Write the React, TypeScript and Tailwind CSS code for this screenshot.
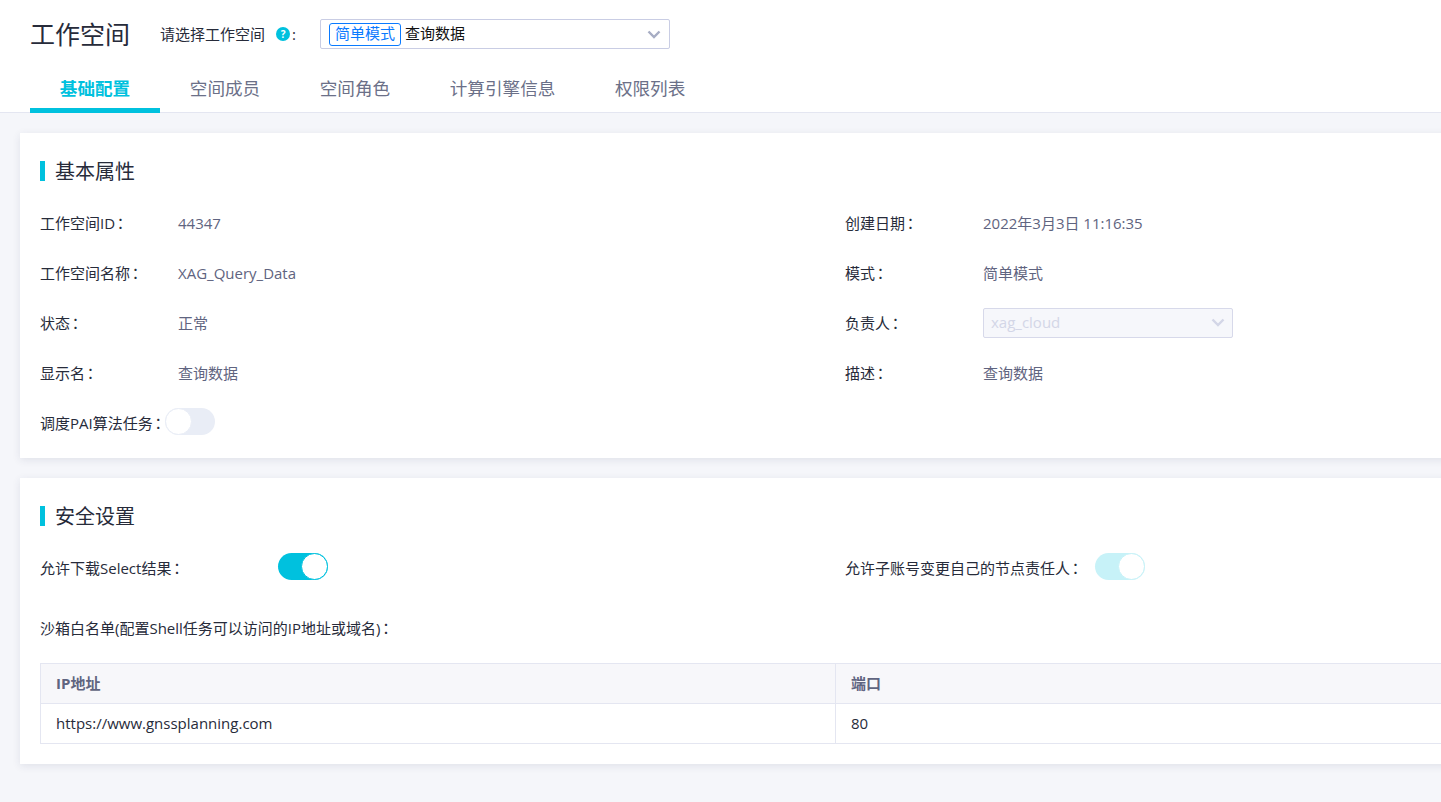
const FONT = "font-['Open_Sans','Noto_Sans_CJK_SC',sans-serif]";

const TABS = ['基础配置', '空间成员', '空间角色', '计算引擎信息', '权限列表'];

function Chevron({ color }: { color: string }) {
  return (
    <svg width="14" height="9" viewBox="0 0 14 9" fill="none" className={`ml-auto ${color}`}>
      <path d="M1.5 1.5L7 7l5.5-5.5" stroke="currentColor" strokeWidth="2.4" />
    </svg>
  );
}

function Colon() {
  return <span className="-ml-[2px] font-['Noto_Sans_CJK_TC',sans-serif]">：</span>;
}

function SectionTitle({ children }: { children: string }) {
  return (
    <div className="flex items-center h-5 gap-[10px]">
      <span className="w-[5px] h-5 bg-[#00c1de]" />
      <span className="mt-[2px] text-[20px] leading-5 text-[#272b3a]">{children}</span>
    </div>
  );
}

function Toggle({ state }: { state: 'off' | 'on' | 'disabled' }) {
  const track =
    state === 'on'
      ? 'bg-[#00c1de] justify-end'
      : state === 'disabled'
        ? 'bg-[#c7f2f8] justify-end'
        : 'bg-[#e9edf6] justify-start';
  const ring =
    state === 'on'
      ? 'border-[#00c1de]'
      : state === 'disabled'
        ? 'border-[#c7f2f8]'
        : 'border-[#e9edf6]';
  return (
    <span className={`flex shrink-0 w-[50px] h-[27px] rounded-full ${track}`}>
      <span className={`w-[27px] h-[27px] rounded-full bg-white border ${ring}`} />
    </span>
  );
}

function Field({
  label,
  children,
}: {
  label: string;
  children: React.ReactNode;
}) {
  return (
    <div className="flex items-center h-[50px]">
      <span className="w-[138px] shrink-0 text-[#272b3a]">
        {label}
        <Colon />
      </span>
      <span className="text-[#5f6480]">{children}</span>
    </div>
  );
}

export default function App() {
  return (
    <div className={`${FONT} text-[15px] leading-5 w-full h-[802px] overflow-hidden bg-[#f5f6fa]`}>
      {/* Header */}
      <div className="h-[113px] bg-white border-b border-[#e4e6f1]">
        <div className="flex items-center h-[68px] pl-[30px]">
          <span className="w-[130px] text-[25px] leading-8 text-[#272b3a]">工作空间</span>
          <span className="text-[#272b3a]">请选择工作空间</span>
          <span className="ml-[11px] flex items-center justify-center w-[14px] h-[14px] rounded-full bg-[#00c1de] text-white text-[10px] font-bold leading-none">
            ?
          </span>
          <span className="ml-[2px] text-[#272b3a]">:</span>
          <div className="ml-[24px] flex items-center w-[350px] h-[30px] border border-[#c9cde4] rounded-[2px] pl-[8px] pr-[8px]">
            <span className="h-[23px] pb-[2px] px-[5px] flex items-center border border-[#0a7aff] rounded-[3px] text-[#0a7aff]">
              简单模式
            </span>
            <span className="ml-[4px] pb-[2px] text-[#111]">查询数据</span>
            <Chevron color="text-[#a7adc4]" />
          </div>
        </div>
        <div className="flex h-[45px] pl-[30px]">
          {TABS.map((tab, i) => (
            <div
              key={tab}
              className={`flex items-start pt-[8px] px-[29.8px] text-[17.6px] leading-6 ${
                i === 0
                  ? 'h-[45px] border-b-[5px] border-[#00c1de] text-[#00c1de] font-bold'
                  : 'text-[#6b7088]'
              }`}
            >
              {tab}
            </div>
          ))}
        </div>
      </div>

      {/* Basic properties */}
      <div className="ml-[20px] mt-[20px] w-[1640px] h-[325px] bg-white shadow-[0_2px_8px_rgba(40,50,90,0.1)] pt-[28px] pl-[20px]">
        <SectionTitle>基本属性</SectionTitle>
        <div className="mt-[17px] grid grid-cols-[805px_1fr]">
          <Field label="工作空间ID">44347</Field>
          <Field label="创建日期">2022年3月3日 11:16:35</Field>
          <Field label="工作空间名称">XAG_Query_Data</Field>
          <Field label="模式">简单模式</Field>
          <Field label="状态">正常</Field>
          <Field label="负责人">
            <span className="flex items-center w-[250px] h-[30px] pb-[2px] px-[7px] bg-[#f6f7fb] border border-[#d7d9ea] rounded-[2px] text-[#d3d6e7]">
              xag_cloud
              <Chevron color="text-[#d3d6e7]" />
            </span>
          </Field>
          <Field label="显示名">查询数据</Field>
          <Field label="描述">查询数据</Field>
          <div className="flex items-center h-[50px]">
            <span className="text-[#272b3a]">
              调度PAI算法任务
              <Colon />
            </span>
            <span className="-mt-[3px] -ml-[1px]">
              <Toggle state="off" />
            </span>
          </div>
        </div>
      </div>

      {/* Security settings */}
      <div className="ml-[20px] mt-[20px] w-[1640px] h-[286px] bg-white shadow-[0_2px_8px_rgba(40,50,90,0.1)] pt-[28px] px-[20px]">
        <SectionTitle>安全设置</SectionTitle>
        <div className="mt-[27px] grid grid-cols-[805px_1fr]">
          <div className="flex items-center h-[27px]">
            <span className="mt-[2px] w-[238px] text-[#272b3a]">
              允许下载Select结果
              <Colon />
            </span>
            <Toggle state="on" />
          </div>
          <div className="flex items-center h-[27px]">
            <span className="mt-[2px] w-[250px] text-[#272b3a]">
              允许子账号变更自己的节点责任人
              <Colon />
            </span>
            <Toggle state="disabled" />
          </div>
        </div>
        <div className="mt-[38px] h-5 flex items-center text-[#272b3a]">
          <span>
            沙箱白名单(配置Shell任务可以访问的IP地址或域名)
            <Colon />
          </span>
        </div>
        <div className="mt-[25px] border border-[#e4e6f1]">
          <div className="flex h-[40px] bg-[#f7f7fa] border-b border-[#e4e6f1] font-bold text-[#5f6480]">
            <div className="flex items-center w-[795px] pb-[2px] px-[15px] border-r border-[#e4e6f1]">IP地址</div>
            <div className="flex items-center pb-[2px] px-[15px]">端口</div>
          </div>
          <div className="flex h-[39px] text-[#272b3a]">
            <div className="flex items-center w-[795px] pb-[2px] px-[15px] border-r border-[#e4e6f1]">
              https://www.gnssplanning.com
            </div>
            <div className="flex items-center pb-[2px] px-[15px]">80</div>
          </div>
        </div>
      </div>
    </div>
  );
}
